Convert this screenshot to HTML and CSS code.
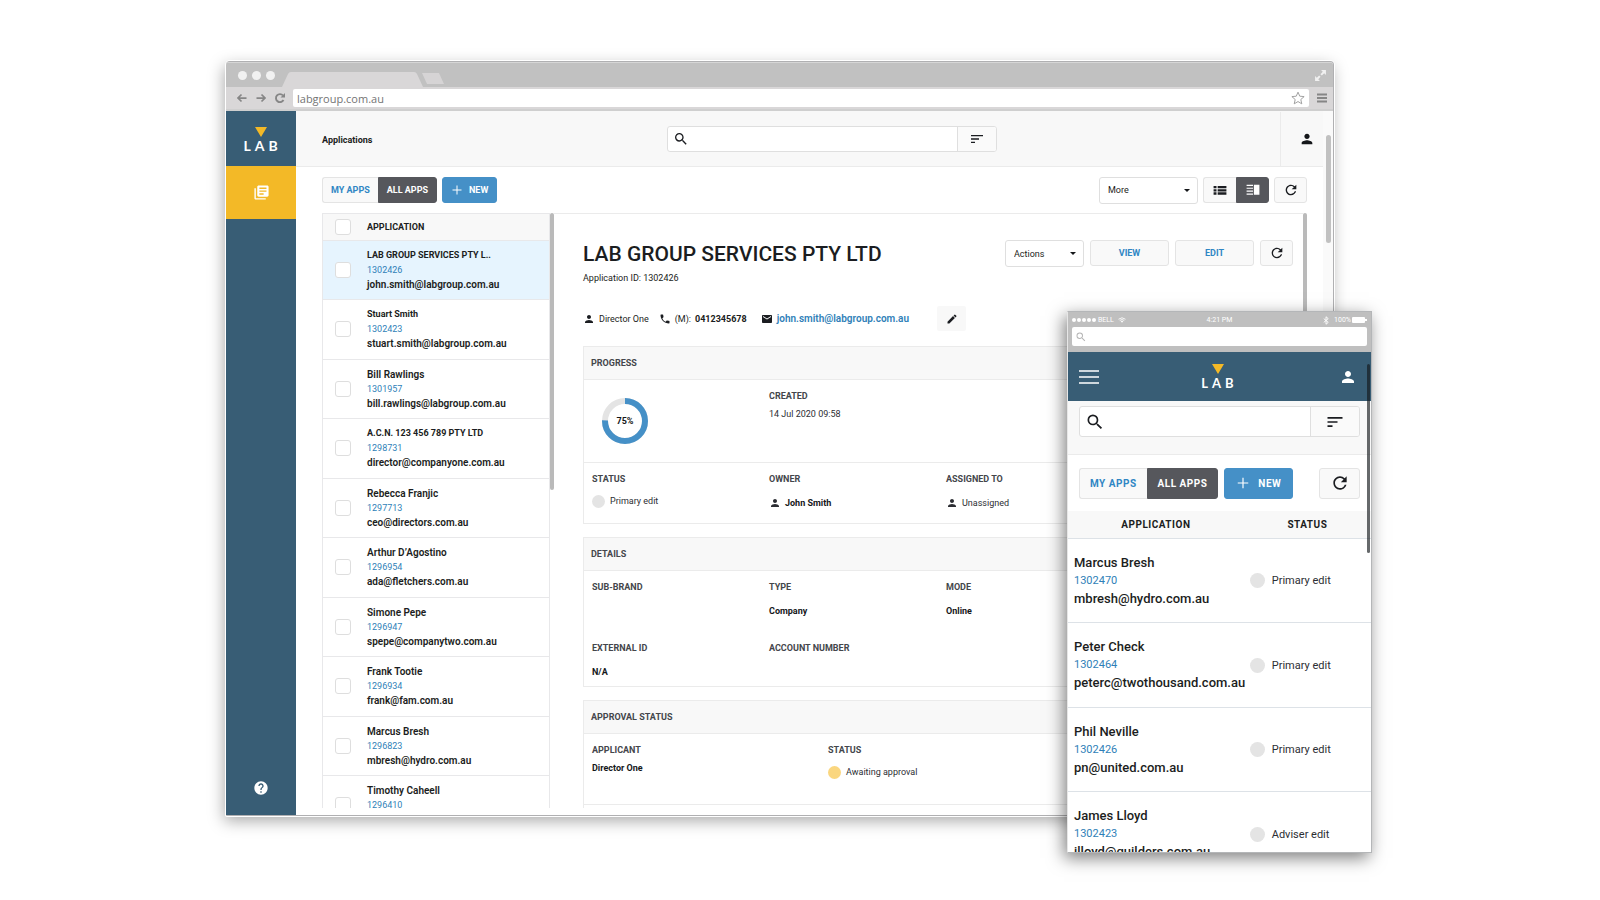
FILE: index.html
```html
<!DOCTYPE html>
<html lang="en">
<head>
<meta charset="utf-8">
<title>LAB Group – Applications</title>
<link rel="stylesheet" href="styles.css">
</head>
<body>
<svg class="sprite" aria-hidden="true">
  <symbol id="i-search" viewBox="0 0 24 24"><path d="M15.5 14h-.79l-.28-.27A6.47 6.47 0 0 0 16 9.5 6.5 6.5 0 1 0 9.5 16c1.61 0 3.09-.59 4.23-1.57l.27.28v.79l5 4.99L20.49 19l-4.99-5zm-6 0C7.01 14 5 11.99 5 9.5S7.01 5 9.5 5 14 7.01 14 9.5 11.99 14 9.5 14z"/></symbol>
  <symbol id="i-sort" viewBox="0 0 24 24"><path d="M3 18h6v-2H3v2zM3 6v2h18V6H3zm0 7h12v-2H3v2z"/></symbol>
  <symbol id="i-person" viewBox="0 0 24 24"><path d="M12 12c2.21 0 4-1.79 4-4s-1.79-4-4-4-4 1.790-4 4 1.790 4 4 4zm0 2c-2.670 0-8 1.340-8 4v2h16v-2c0-2.660-5.330-4-8-4z"/></symbol>
  <symbol id="i-refresh" viewBox="0 0 24 24"><path d="M17.650 6.350A7.958 7.958 0 0 0 12 4c-4.420 0-7.990 3.580-7.990 8s3.570 8 7.990 8c3.730 0 6.840-2.550 7.730-6h-2.080A5.990 5.990 0 0 1 12 18c-3.310 0-6-2.690-6-6s2.690-6 6-6c1.660 0 3.140.69 4.220 1.780L13 11h7V4l-2.350 2.350z"/></symbol>
  <symbol id="i-books" viewBox="0 0 24 24"><path d="M4 6H2v14c0 1.100.9 2 2 2h14v-2H4V6zm16-4H8c-1.100 0-2 .9-2 2v12c0 1.100.9 2 2 2h12c1.100 0 2-.9 2-2V4c0-1.100-.9-2-2-2zm-1 9H9V9h10v2zm-4 4H9v-2h6v2zm4-8H9V5h10v2z"/></symbol>
  <symbol id="i-help" viewBox="0 0 24 24"><path d="M12 2C6.480 2 2 6.480 2 12s4.480 10 10 10 10-4.480 10-10S17.520 2 12 2zm1 17h-2v-2h2v2zm2.070-7.750l-.9.920C13.450 12.900 13 13.500 13 15h-2v-.5c0-1.100.45-2.100 1.170-2.830l1.240-1.260c.37-.36.59-.86.59-1.410 0-1.100-.9-2-2-2s-2 .9-2 2H8c0-2.210 1.790-4 4-4s4 1.790 4 4c0 .88-.36 1.680-.93 2.250z"/></symbol>
  <symbol id="i-list" viewBox="0 0 24 24"><path d="M1 14.500h5v-4H1v4zm0 5.500h5v-4H1v4zm0-11h5V5H1v4zm7 5.500h15v-4H8v4zm0 5.500h15v-4H8v4zM8 5v4h15V5z"/></symbol>
  <symbol id="i-split" viewBox="0 0 24 24"><path d="M1 3h11v2H1zM1 8h11v2H1zM1 13h11v2H1zM1 18h11v2H1zM13.500 3H23v17h-9.500z"/></symbol>
  <symbol id="i-phone" viewBox="0 0 24 24"><path d="M6.620 10.790c1.440 2.830 3.760 5.140 6.590 6.590l2.200-2.200c.27-.27.67-.36 1.020-.24 1.120.37 2.330.57 3.570.57.55 0 1 .45 1 1V20c0 .55-.45 1-1 1-9.390 0-17-7.610-17-17 0-.55.45-1 1-1h3.500c.55 0 1 .45 1 1 0 1.250.2 2.450.57 3.570.11.35.03.74-.25 1.020l-2.200 2.200z"/></symbol>
  <symbol id="i-mail" viewBox="0 0 24 24"><path d="M20 4H4c-1.100 0-2 .9-2 2v12c0 1.100.9 2 2 2h16c1.100 0 2-.9 2-2V6c0-1.100-.9-2-2-2zm0 4l-8 5-8-5V6l8 5 8-5v2z"/></symbol>
  <symbol id="i-edit" viewBox="0 0 24 24"><path d="M3 17.250V21h3.750L17.810 9.940l-3.750-3.750L3 17.250zM20.710 7.040a1 1 0 0 0 0-1.410l-2.340-2.340a1 1 0 0 0-1.410 0l-1.830 1.830 3.750 3.750 1.830-1.830z"/></symbol>
  <symbol id="i-plus" viewBox="0 0 24 24"><path d="M11 3h2v8h8v2h-8v8h-2v-8H3v-2h8z"/></symbol>
  <symbol id="i-back" viewBox="0 0 24 24"><path d="M21 12H5M11 5l-7 7 7 7" fill="none" stroke="currentColor" stroke-width="3.500"/></symbol>
  <symbol id="i-forward" viewBox="0 0 24 24"><path d="M3 12h16M13 5l7 7-7 7" fill="none" stroke="currentColor" stroke-width="3.500"/></symbol>
  <symbol id="i-reload" viewBox="0 0 24 24"><path d="M19 16a8 8 0 1 1-1-9" fill="none" stroke="currentColor" stroke-width="3.800"/><path d="M22 2v9h-9z"/></symbol>
  <symbol id="i-star" viewBox="0 0 24 24"><path d="M12 2l3 6.900 7.500.7-5.700 5 1.700 7.400L12 18.100 5.500 22l1.700-7.400-5.700-5L9 8.900z" fill="none" stroke="currentColor" stroke-width="1.600"/></symbol>
  <symbol id="i-menu" viewBox="0 0 24 24"><path d="M2 3h20v4H2zM2 10h20v4H2zM2 17h20v4H2z"/></symbol>
  <symbol id="i-expand" viewBox="0 0 24 24"><path d="M13 2h9v9l-3.200-3.200-4.300 4.300-2.600-2.600 4.300-4.300zM11 22H2v-9l3.200 3.200 4.300-4.300 2.600 2.600-4.300 4.300z"/></symbol>
</svg>

<main class="stage">
  <section class="browser" aria-label="Desktop view">
    <div class="titlebar">
      <span class="dots"><i></i><i></i><i></i></span>
      <svg class="tabs" viewBox="0 0 164 16" aria-hidden="true"><path d="M0 16 6 3Q7 1 9 1H132Q134 1 135 3L141 16z"/><path d="M140 2H157L162 13H145z" opacity=".85"/></svg>
      <svg class="icon expand"><use href="#i-expand"/></svg>
    </div>
    <div class="navbar">
      <svg class="icon i12"><use href="#i-back"/></svg>
      <svg class="icon i12"><use href="#i-forward"/></svg>
      <svg class="icon i12"><use href="#i-reload"/></svg>
      <label class="address"><input type="text" aria-label="Address" value="labgroup.com.au"><svg class="icon i14"><use href="#i-star"/></svg></label>
      <svg class="icon i12"><use href="#i-menu"/></svg>
    </div>
    <div class="app">
      <nav class="sidebar" aria-label="Main">
        <a class="logo" href="#"><svg viewBox="0 0 12 10" aria-hidden="true"><path d="M0 0h12L6 10z"/></svg><span>LAB</span></a>
        <a class="nav-item" href="#" aria-label="Applications"><svg class="icon i17"><use href="#i-books"/></svg></a>
        <a class="help" href="#" aria-label="Help"><svg class="icon i16"><use href="#i-help"/></svg></a>
      </nav>
      <div class="main">
        <header class="header">
          <h1>Applications</h1>
          <div class="search">
            <label><svg class="icon i16"><use href="#i-search"/></svg><input type="text" aria-label="Search"></label>
            <button type="button" aria-label="Filter"><svg class="icon i16"><use href="#i-sort"/></svg></button>
          </div>
          <a class="account" href="#" aria-label="Account"><svg class="icon i16"><use href="#i-person"/></svg></a>
        </header>
        <div class="toolbar">
          <div class="group"><button class="btn link" type="button">MY APPS</button><button class="btn dark" type="button">ALL APPS</button></div>
          <button class="btn primary" type="button"><svg class="icon i12"><use href="#i-plus"/></svg>NEW</button>
          <span class="select more"><select aria-label="More"><option>More</option></select></span>
          <div class="group views"><button class="btn" type="button" aria-label="List view"><svg class="icon i14"><use href="#i-list"/></svg></button><button class="btn dark" type="button" aria-label="Split view"><svg class="icon i14"><use href="#i-split"/></svg></button></div>
          <button class="btn square" type="button" aria-label="Refresh"><svg class="icon i16"><use href="#i-refresh"/></svg></button>
        </div>
        <div class="split">
          <div class="list">
            <table>
              <thead><tr><th class="pick"><input type="checkbox" aria-label="Select all"></th><th>APPLICATION</th></tr></thead>
              <tbody>
                <tr class="selected"><td class="pick"><input type="checkbox" aria-label="Select 1302426"></td><td><strong class="small">LAB GROUP SERVICES PTY L..</strong><a href="#">1302426</a><span>john.smith@labgroup.com.au</span></td></tr>
                <tr><td class="pick"><input type="checkbox" aria-label="Select 1302423"></td><td><strong class="small">Stuart Smith</strong><a href="#">1302423</a><span>stuart.smith@labgroup.com.au</span></td></tr>
                <tr><td class="pick"><input type="checkbox" aria-label="Select 1301957"></td><td><strong>Bill Rawlings</strong><a href="#">1301957</a><span>bill.rawlings@labgroup.com.au</span></td></tr>
                <tr><td class="pick"><input type="checkbox" aria-label="Select 1298731"></td><td><strong class="small">A.C.N. 123 456 789 PTY LTD</strong><a href="#">1298731</a><span>director@companyone.com.au</span></td></tr>
                <tr><td class="pick"><input type="checkbox" aria-label="Select 1297713"></td><td><strong>Rebecca Franjic</strong><a href="#">1297713</a><span>ceo@directors.com.au</span></td></tr>
                <tr><td class="pick"><input type="checkbox" aria-label="Select 1296954"></td><td><strong>Arthur D’Agostino</strong><a href="#">1296954</a><span>ada@fletchers.com.au</span></td></tr>
                <tr><td class="pick"><input type="checkbox" aria-label="Select 1296947"></td><td><strong>Simone Pepe</strong><a href="#">1296947</a><span>spepe@companytwo.com.au</span></td></tr>
                <tr><td class="pick"><input type="checkbox" aria-label="Select 1296934"></td><td><strong>Frank Tootie</strong><a href="#">1296934</a><span>frank@fam.com.au</span></td></tr>
                <tr><td class="pick"><input type="checkbox" aria-label="Select 1296823"></td><td><strong>Marcus Bresh</strong><a href="#">1296823</a><span>mbresh@hydro.com.au</span></td></tr>
                <tr><td class="pick"><input type="checkbox" aria-label="Select 1296410"></td><td><strong>Timothy Caheell</strong><a href="#">1296410</a></td></tr>
              </tbody>
            </table>
          </div>
          <div class="track list-track"><i></i></div>
          <article class="detail">
            <div class="detail-head">
              <div class="detail-title"><h2>LAB GROUP SERVICES PTY LTD</h2><p>Application ID: 1302426</p></div>
              <span class="select actions"><select aria-label="Actions"><option>Actions</option></select></span>
              <button class="btn link wide" type="button">VIEW</button>
              <button class="btn link wide" type="button">EDIT</button>
              <button class="btn square" type="button" aria-label="Refresh application"><svg class="icon i16"><use href="#i-refresh"/></svg></button>
            </div>
            <div class="contact">
              <span><svg class="icon i12"><use href="#i-person"/></svg>Director One</span>
              <span><svg class="icon i12"><use href="#i-phone"/></svg>(M): <b>0412345678</b></span>
              <span class="mail"><svg class="icon i12"><use href="#i-mail"/></svg><a href="#">john.smith@labgroup.com.au</a></span>
              <button class="edit" type="button" aria-label="Edit contact"><svg class="icon i12"><use href="#i-edit"/></svg></button>
            </div>
            <section class="card">
              <h3>PROGRESS</h3>
              <div class="cells four tall">
                <div class="ring-cell"><svg class="ring" viewBox="0 0 46 46" role="img" aria-label="75 percent complete"><circle cx="23" cy="23" r="20" stroke="#e4e4e4"/><circle cx="23" cy="23" r="20" stroke="#4590c7" stroke-dasharray="94.250 125.660" transform="rotate(-90 23 23)"/><text x="23" y="26">75%</text></svg></div>
                <div><h4>CREATED</h4><p>14 Jul 2020 09:58</p></div>
              </div>
              <div class="cells four roomy ruled">
                <div><h4>STATUS</h4><p class="state"><i></i>Primary edit</p></div>
                <div><h4>OWNER</h4><p class="who"><svg class="icon i12"><use href="#i-person"/></svg><b>John Smith</b></p></div>
                <div><h4>ASSIGNED TO</h4><p class="who"><svg class="icon i12"><use href="#i-person"/></svg>Unassigned</p></div>
              </div>
            </section>
            <section class="card">
              <h3>DETAILS</h3>
              <div class="cells four roomy">
                <div><h4>SUB-BRAND</h4></div>
                <div><h4>TYPE</h4><p><b>Company</b></p></div>
                <div><h4>MODE</h4><p><b>Online</b></p></div>
              </div>
              <div class="cells four roomy short">
                <div><h4>EXTERNAL ID</h4><p><b>N/A</b></p></div>
                <div><h4>ACCOUNT NUMBER</h4></div>
              </div>
            </section>
            <section class="card">
              <h3>APPROVAL STATUS</h3>
              <div class="cells three approval">
                <div><h4>APPLICANT</h4><p><b>Director One</b></p></div>
                <div><h4>STATUS</h4><p class="state amber"><i></i>Awaiting approval</p></div>
              </div>
              <div class="cells three ruled"><div></div></div>
            </section>
          </article>
          <div class="track detail-track"><i></i></div>
        </div>
      </div>
      <div class="track page-track"><i></i></div>
    </div>
  </section>

  <section class="phone" aria-label="Mobile view">
    <div class="phone-top">
      <div class="status-bar">
        <span class="carrier"><i></i><i></i><i></i><i></i><i></i> BELL
          <svg viewBox="0 0 16 12" class="wifi" aria-hidden="true"><path d="M1 4.500Q8-1.500 15 4.500M3.500 7Q8 3 12.500 7" fill="none" stroke="#fff" stroke-width="1.700"/><path d="M5.500 8.500Q8 6.500 10.500 8.500L8 11.500z"/></svg></span>
        <span>4:21 PM</span>
        <span class="power"><svg viewBox="0 0 8 12" class="bluetooth" aria-hidden="true"><path d="M1 3.500l6 5L4 11V1l3 2.500-6 5" fill="none" stroke="#fff" stroke-width="1.200"/></svg>100%<svg viewBox="0 0 15 6" class="battery" aria-hidden="true"><rect width="13" height="6" rx="1"/><rect x="13" y="2" width="2" height="2"/></svg></span>
      </div>
      <label class="phone-address"><svg class="icon i12"><use href="#i-search"/></svg><input type="text" aria-label="Phone address"></label>
    </div>
    <header class="phone-header">
      <button type="button" aria-label="Menu"><svg viewBox="0 0 20 14" class="burger"><path d="M0 1h20M0 7h20M0 13h20" stroke="#fff" stroke-width="1.500"/></svg></button>
      <a class="logo" href="#"><svg viewBox="0 0 12 10" aria-hidden="true"><path d="M0 0h12L6 10z"/></svg><span>LAB</span></a>
      <a class="phone-account" href="#" aria-label="Mobile account"><svg class="icon i18"><use href="#i-person"/></svg></a>
    </header>
    <div class="phone-search">
      <div class="search">
        <label><svg class="icon i20"><use href="#i-search"/></svg><input type="text" aria-label="Mobile search"></label>
        <button type="button" aria-label="Mobile filter"><svg class="icon i20"><use href="#i-sort"/></svg></button>
      </div>
    </div>
    <div class="phone-tools">
      <div class="group"><button class="btn link" type="button">MY APPS</button><button class="btn dark" type="button">ALL APPS</button></div>
      <button class="btn primary" type="button"><svg class="icon i14"><use href="#i-plus"/></svg>NEW</button>
      <button class="btn square" type="button" aria-label="Refresh list"><svg class="icon i20"><use href="#i-refresh"/></svg></button>
    </div>
    <table class="phone-table">
      <thead><tr><th>APPLICATION</th><th>STATUS</th></tr></thead>
      <tbody>
        <tr><td><strong>Marcus Bresh</strong><a href="#">1302470</a><span>mbresh@hydro.com.au</span></td><td><p class="state"><i></i>Primary edit</p></td></tr>
        <tr><td><strong>Peter Check</strong><a href="#">1302464</a><span>peterc@twothousand.com.au</span></td><td><p class="state"><i></i>Primary edit</p></td></tr>
        <tr><td><strong>Phil Neville</strong><a href="#">1302426</a><span>pn@united.com.au</span></td><td><p class="state"><i></i>Primary edit</p></td></tr>
        <tr><td><strong>James Lloyd</strong><a href="#">1302423</a><span>jlloyd@guilders.com.au</span></td><td><p class="state"><i></i>Adviser edit</p></td></tr>
      </tbody>
    </table>
    <div class="phone-thumb"></div>
  </section>
</main>
</body>
</html>
```
FILE: styles.css
```css
* { box-sizing: border-box; }

body {
  margin: 0;
  background: #fff;
  color: #1b1d21;
  font-family: Roboto, "Liberation Sans", sans-serif;
  font-size: 9px;
}

h1, h2, h3, h4, p { margin: 0; }
a { color: #2f7fb8; text-decoration: none; }
b, strong { font-weight: 500; }
button, input, select { font: inherit; color: inherit; }
button { cursor: pointer; padding: 0; }
table { border-collapse: collapse; width: 100%; }
th { font-weight: 700; }

.sprite { position: absolute; width: 0; height: 0; }
.icon { display: block; flex: none; fill: currentColor; }
.i12 { width: 12px; height: 12px; }
.i14 { width: 14px; height: 14px; }
.i16 { width: 16px; height: 16px; }
.i17 { width: 17px; height: 17px; }
.i18 { width: 18px; height: 18px; }
.i20 { width: 20px; height: 20px; }

.stage { position: relative; height: 100vh; min-height: 600px; overflow: hidden; }

/* Desktop window */
.browser {
  position: absolute;
  left: 14.125%;
  right: 16.625%;
  top: 61px;
  bottom: 84px;
  display: flex;
  flex-direction: column;
  overflow: hidden;
  background: #fff;
  border: 1px solid #b0b0b2;
  border-left: 0;
  border-radius: 4px 4px 1px 1px;
  box-shadow: 0 0 0 1px #fff, -2px 5px 16px rgba(0, 0, 0, .34);
}

.titlebar {
  display: flex;
  align-items: flex-end;
  height: 25px;
  padding: 0 6px 0 12px;
  background: #c1c1c1;
  border-top: 1px solid #d6d6d6;
}
.dots { display: flex; gap: 5px; align-self: center; margin-right: 7px; }
.dots i { width: 9px; height: 9px; border-radius: 50%; background: #f1f1f1; }
.tabs { width: 164px; height: 16px; fill: #d9d7d8; }
.expand { width: 13px; height: 13px; margin-left: auto; align-self: center; color: #f1f1f1; }

.navbar {
  display: flex;
  align-items: center;
  gap: 7px;
  height: 24px;
  padding: 0 5px 0 10px;
  background: #d9d7d8;
  color: #868686;
  border-bottom: 2px solid #cfcfcf;
}
.address {
  flex: 1;
  display: flex;
  align-items: center;
  height: 18px;
  padding: 0 4px;
  background: #fff;
  border-radius: 2px;
}
.address input {
  flex: 1;
  min-width: 0;
  padding: 0;
  border: 0;
  background: none;
  font: 500 11px "Open Sans", sans-serif;
  color: #747474;
}
.address .icon { color: #9b9b9b; }

.app { flex: 1; display: flex; min-height: 0; }

.sidebar { display: flex; flex-direction: column; width: 70px; background: #385d75; color: #fff; }
.logo { display: flex; flex-direction: column; align-items: center; color: #fff; }
.logo svg { width: 12px; height: 10px; fill: #f3b927; }
.logo span { font: 700 14px/14px Lato, sans-serif; letter-spacing: 4px; padding-left: 3px; margin-top: 2px; }
.sidebar .logo { height: 55px; padding-top: 16px; }
.nav-item { display: grid; place-items: center; height: 53px; background: #f3b927; color: #fff; }
.help { display: grid; place-items: center; margin-top: auto; height: 54px; color: #fff; }

.main { flex: 1; display: flex; flex-direction: column; min-width: 0; padding-bottom: 7px; }

.header {
  display: grid;
  grid-template-columns: 371fr 330fr 283fr 43px;
  align-items: center;
  height: 56px;
  padding-top: 1px;
  background: #f8f8f8;
  border-bottom: 1px solid #ebebeb;
}
.header h1 { padding: 2px 0 0 26px; font-size: 9px; font-weight: 700; }
.account {
  grid-column: 4;
  display: grid;
  place-items: center;
  height: 100%;
  padding-left: 9px;
  border-left: 1px solid #ebebeb;
  color: #15171a;
}

.search { display: flex; height: 26px; border: 1px solid #dfdfdf; border-radius: 3px; overflow: hidden; background: #fff; }
.search label { flex: 1; display: flex; align-items: center; padding: 0 5px; }
.search input { flex: 1; min-width: 0; border: 0; outline: 0; background: none; }
.search button { display: grid; place-items: center; width: 39px; background: #fafafa; border: 0; border-left: 1px solid #dfdfdf; }

.toolbar { display: flex; align-items: center; gap: 5px; height: 46px; padding: 0 16px 0 26px; }
.group { display: flex; }
.btn {
  display: flex;
  align-items: center;
  justify-content: center;
  height: 26px;
  padding: 0 8px;
  background: #f9f9f9;
  border: 1px solid #e4e4e4;
  border-radius: 3px;
  font-weight: 700;
}
.btn.link { color: #3086c4; }
.btn.dark { background: #56575c; border-color: #56575c; color: #fff; }
.btn.primary { background: #4590c7; border-color: #4590c7; color: #fff; gap: 6px; }
.group .btn:first-child { border-radius: 3px 0 0 3px; border-right: 0; }
.group .btn:last-child { border-radius: 0 3px 3px 0; }
.btn.square { width: 33px; padding: 0; }
.views .btn { width: 33px; padding: 0; }

.select { position: relative; height: 27px; }
.select select {
  appearance: none;
  width: 100%;
  height: 100%;
  padding: 0 8px;
  background: #fff;
  border: 1px solid #dfdfdf;
  border-radius: 3px;
}
.select::after {
  content: "";
  position: absolute;
  right: 8px;
  top: 12px;
  border: 3px solid transparent;
  border-top-color: #15171a;
  border-bottom: 0;
}
.more { width: 99px; margin-left: auto; }
.actions { width: 79px; }

.split { flex: 1; display: flex; min-height: 0; padding: 0 16px 0 26px; }
.list { width: 228px; overflow: hidden; border: 1px solid #e8e8ea; border-bottom: 0; }
.list table { table-layout: fixed; }
.list th, .list td { padding: 0; text-align: left; }
.list thead tr { height: 26px; background: #f8f8f8; }
.list tbody tr { height: 59px; border-top: 1px solid #e8e8ea; }
.list tbody tr:nth-child(even) { height: 60px; }
.list .selected { background: #e6f4fe; }
.list td { vertical-align: top; padding-top: 7px; }
.list .pick { width: 44px; padding: 0 0 0 12px; vertical-align: middle; }
.list td strong, .list td span { display: block; font-size: 10px; line-height: 15px; font-weight: 600; }
.list td .small { font-size: 9px; font-weight: 700; }
.list td a { display: block; font-size: 9px; line-height: 14px; }
input[type="checkbox"] {
  appearance: none;
  display: block;
  width: 16px;
  height: 16px;
  margin: 0;
  background: #fff;
  border: 1px solid #dedede;
  border-radius: 3px;
}

.track { flex: none; width: 4px; }
.track i { display: block; border-radius: 2px; background: #bababa; }
.list-track i { height: 277px; }
.detail-track i { height: 200px; }
.page-track { width: 10px; padding: 24px 2px 0 3px; background: #fafafa; }
.page-track i { height: 108px; border-radius: 3px; background: #c1c1c1; }

.detail { flex: 1; min-width: 0; overflow: hidden; padding: 26px 10px 0 29px; border-top: 1px solid #ebebeb; }
.detail-head { display: flex; align-items: flex-start; gap: 6px; height: 46px; }
.detail-title { flex: 1; min-width: 0; white-space: nowrap; }
.detail-title h2 { font-size: 21px; line-height: 28px; font-weight: 500; }
.detail-title p { margin-top: 4px; line-height: 12px; }
.wide { width: 79px; }

.contact { display: flex; align-items: center; margin: 20px 0 15px; height: 25px; }
.contact span { display: flex; align-items: center; gap: 4px; margin-right: 10px; white-space: nowrap; }
.contact .mail { margin: 0 28px 0 4px; font-size: 10px; font-weight: 600; }
.contact b { font-weight: 700; }
.edit { display: grid; place-items: center; width: 29px; height: 25px; background: #f8f8f8; border: 0; border-radius: 2px; }

.card { margin-bottom: 13px; border: 1px solid #ebebeb; }
.card h3 { padding: 0 7px; background: #f8f8f8; border-bottom: 1px solid #ebebeb; line-height: 32px; font-size: 9px; color: #44464b; }
.cells { display: grid; gap: 0; padding: 10px 0 0; }
.four { grid-template-columns: repeat(4, 1fr); }
.three { grid-template-columns: repeat(3, 1fr); }
.cells > div { padding: 0 8px; }
.cells h4 { font-size: 9px; line-height: 12px; color: #44464b; }
.cells p { margin-top: 4px; line-height: 16px; color: #2c2e33; }
.cells b { font-weight: 700; color: #15171a; }
.tall { height: 82px; }
.roomy { height: 61px; }
.roomy p { margin-top: 10px; }
.roomy .state { margin-top: 8px; }
.short { height: 54px; }
.ruled { border-top: 1px solid #ebebeb; }
.approval { height: 70px; }
.approval .state { margin-top: 8px; }
.state { display: flex; align-items: center; gap: 5px; }
.state i { width: 13px; height: 13px; border-radius: 50%; background: #e4e4e4; }
.amber i { background: #fad67f; }
.who { display: flex; align-items: center; gap: 4px; }
.ring-cell .ring { display: block; width: 46px; height: 46px; margin: 8px 0 0 10px; }
.ring circle { fill: none; stroke-width: 6; }
.ring text { font-size: 9px; font-weight: 700; text-anchor: middle; fill: #15171a; }

/* Phone */
.phone {
  position: absolute;
  right: 14.25%;
  top: 311px;
  bottom: 47px;
  width: 305px;
  overflow: hidden;
  background: #fff;
  border: 1px solid #b4b6b8;
  border-left-color: #e6e6e6;
  box-shadow: -3px 5px 16px rgba(0, 0, 0, .5);
}
.phone-top { height: 40px; padding: 2px 4px 0; background: #bfbfbf; }
.status-bar { display: grid; grid-template-columns: 1fr auto 1fr; align-items: center; height: 12px; color: #fff; font-size: 7px; }
.carrier, .power { display: flex; align-items: center; gap: 1px; }
.carrier i { width: 4px; height: 4px; border-radius: 50%; background: #fff; }
.carrier i:last-of-type { margin-right: 1px; }
.power { justify-content: flex-end; }
.wifi { width: 8px; height: 6px; margin-left: 3px; fill: #fff; }
.bluetooth { width: 6px; height: 9px; margin-right: 4px; }
.battery { width: 15px; height: 6px; fill: #fff; }
.phone-address { display: flex; align-items: center; height: 19px; margin-top: 1px; padding: 0 3px; background: #fff; border-radius: 2px; color: #b5b5b5; }
.phone-address input { flex: 1; min-width: 0; border: 0; background: none; }

.phone-header { display: grid; grid-template-columns: 1fr auto 1fr; align-items: center; height: 49px; padding: 0 14px 0 11px; background: #385d75; }
.phone-header button { width: 20px; height: 20px; border: 0; background: none; }
.burger { display: block; width: 20px; height: 14px; }
.phone-header .logo span { font-size: 13px; }
.phone-account { justify-self: end; color: #fff; }
.phone-search { height: 54px; padding: 5px 11px 0; background: #f8f8f8; border-bottom: 1px solid #ebebeb; }
.phone-search .search { height: 31px; }
.phone-search .search button { width: 49px; }
.phone-tools { display: flex; align-items: center; gap: 6px; height: 56px; padding: 0 11px; }
.phone-tools .btn { height: 31px; padding: 0 10px; font-size: 10px; letter-spacing: .05em; }
.phone-tools .btn.primary { gap: 8px; padding: 0 11px; }
.phone-tools .btn.square { width: 41px; padding: 0; margin-left: auto; }

.phone-table { table-layout: fixed; }
.phone-table th { width: 58%; height: 27px; padding: 0; background: #f8f8f8; font-size: 10px; letter-spacing: .05em; }
.phone-table th + th { width: 42%; }
.phone-table tbody tr { height: 84px; border-top: 1px solid #dde2e7; }
.phone-table tbody tr:nth-child(even) { height: 85px; }
.phone-table td { padding: 1px 0 0 6px; white-space: nowrap; vertical-align: middle; }
.phone-table strong, .phone-table span { display: block; font-size: 13px; line-height: 18px; font-weight: 500; }
.phone-table a { display: block; font-size: 11px; line-height: 18px; }
.phone-table .state { gap: 7px; font-size: 11px; color: #2c2e33; }
.phone-table .state i { width: 15px; height: 15px; }
.phone-thumb { position: absolute; right: 1px; top: 52px; width: 3px; height: 189px; border-radius: 2px; background: rgba(20, 24, 28, .65); }
```
